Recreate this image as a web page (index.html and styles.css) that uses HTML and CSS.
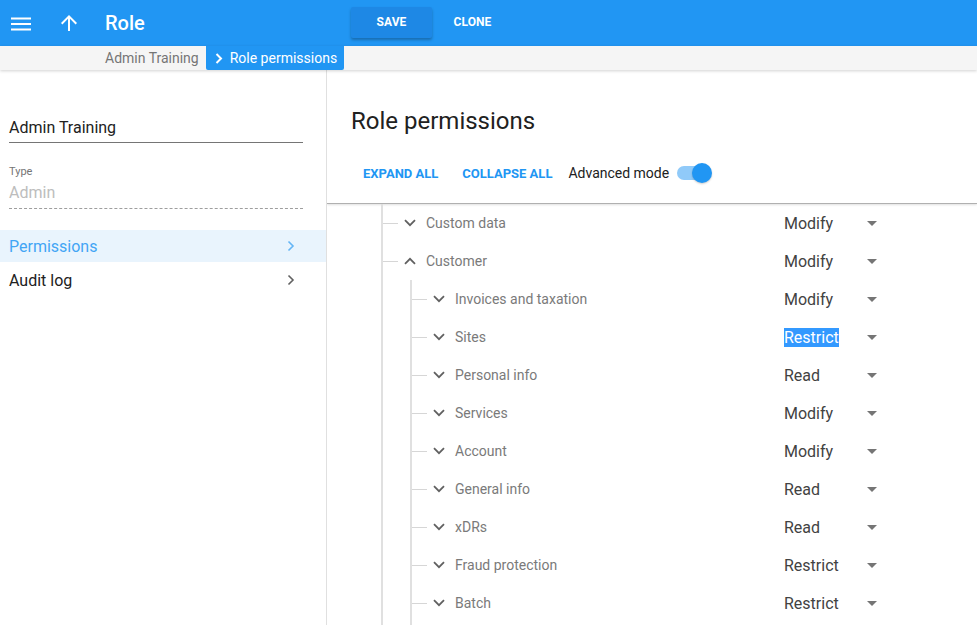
FILE: index.html
```html
<!DOCTYPE html>
<html lang="en">
<head>
<meta charset="utf-8">
<title>Role</title>
<link rel="stylesheet" href="styles.css">
</head>
<body>
<header class="appbar">
  <span class="icon menu-icon">
    <svg width="20" height="14" viewBox="0 0 20 14"><rect x="0" y="0.5" width="20" height="2" fill="#fff"/><rect x="0" y="6" width="20" height="2" fill="#fff"/><rect x="0" y="11.5" width="20" height="2" fill="#fff"/></svg>
  </span>
  <span class="icon up-icon">
    <svg width="24" height="24" viewBox="0 0 24 24"><path d="M4 12l1.41 1.41L11 7.83V20h2V7.83l5.58 5.59L20 12l-8-8-8 8z" fill="#fff"/></svg>
  </span>
  <h1 class="title">Role</h1>
  <div class="actions">
    <button class="btn btn-raised">SAVE</button>
    <button class="btn btn-flat">CLONE</button>
  </div>
</header>
<nav class="crumbs">
  <span class="crumb">Admin Training</span>
  <span class="crumb crumb-active">
    <svg width="8" height="11" viewBox="0 0 8 11"><polyline points="1.5,1 6,5.5 1.5,10" fill="none" stroke="#fff" stroke-width="2"/></svg>
    Role permissions
  </span>
</nav>
<main class="layout">
  <aside class="side">
    <div class="field">Admin Training</div>
    <div class="field-label">Type</div>
    <div class="field field-ro">Admin</div>
    <ul class="side-nav">
      <li class="nav-item active"><span>Permissions</span>
        <svg width="8" height="12" viewBox="0 0 8 12"><polyline points="1.5,1.5 6,6 1.5,10.5" fill="none" stroke="#64b5f6" stroke-width="1.6"/></svg>
      </li>
      <li class="nav-item"><span>Audit log</span>
        <svg width="8" height="12" viewBox="0 0 8 12"><polyline points="1.5,1.5 6,6 1.5,10.5" fill="none" stroke="#616161" stroke-width="1.6"/></svg>
      </li>
    </ul>
  </aside>
  <section class="content">
    <div class="content-head">
      <h2 class="page-title">Role permissions</h2>
      <div class="toolbar">
        <button class="tbtn">EXPAND ALL</button>
        <button class="tbtn">COLLAPSE ALL</button>
        <span class="adv">Advanced mode</span>
        <span class="toggle"><span class="track"></span><span class="thumb"></span></span>
      </div>
    </div>
    <div class="tree-wrap">
      <ul class="tree">
        <li>
          <div class="row"><span class="conn"></span><svg class="chev" width="12" height="8" viewBox="0 0 12 8"><polyline points="1,1.2 6,6.2 11,1.2"/></svg><span class="label">Custom data</span><span class="val"><span class="val-text">Modify</span><span class="caret"></span></span></div>
        </li>
        <li>
          <div class="row"><span class="conn"></span><svg class="chev" width="12" height="8" viewBox="0 0 12 8"><polyline points="1,6.8 6,1.8 11,6.8"/></svg><span class="label">Customer</span><span class="val"><span class="val-text">Modify</span><span class="caret"></span></span></div>
          <ul class="tree sub">
            <li><div class="row"><span class="conn"></span><svg class="chev" width="12" height="8" viewBox="0 0 12 8"><polyline points="1,1.2 6,6.2 11,1.2"/></svg><span class="label">Invoices and taxation</span><span class="val"><span class="val-text">Modify</span><span class="caret"></span></span></div></li>
            <li><div class="row"><span class="conn"></span><svg class="chev" width="12" height="8" viewBox="0 0 12 8"><polyline points="1,1.2 6,6.2 11,1.2"/></svg><span class="label">Sites</span><span class="val"><span class="val-text"><span class="sel">Restrict</span></span><span class="caret"></span></span></div></li>
            <li><div class="row"><span class="conn"></span><svg class="chev" width="12" height="8" viewBox="0 0 12 8"><polyline points="1,1.2 6,6.2 11,1.2"/></svg><span class="label">Personal info</span><span class="val"><span class="val-text">Read</span><span class="caret"></span></span></div></li>
            <li><div class="row"><span class="conn"></span><svg class="chev" width="12" height="8" viewBox="0 0 12 8"><polyline points="1,1.2 6,6.2 11,1.2"/></svg><span class="label">Services</span><span class="val"><span class="val-text">Modify</span><span class="caret"></span></span></div></li>
            <li><div class="row"><span class="conn"></span><svg class="chev" width="12" height="8" viewBox="0 0 12 8"><polyline points="1,1.2 6,6.2 11,1.2"/></svg><span class="label">Account</span><span class="val"><span class="val-text">Modify</span><span class="caret"></span></span></div></li>
            <li><div class="row"><span class="conn"></span><svg class="chev" width="12" height="8" viewBox="0 0 12 8"><polyline points="1,1.2 6,6.2 11,1.2"/></svg><span class="label">General info</span><span class="val"><span class="val-text">Read</span><span class="caret"></span></span></div></li>
            <li><div class="row"><span class="conn"></span><svg class="chev" width="12" height="8" viewBox="0 0 12 8"><polyline points="1,1.2 6,6.2 11,1.2"/></svg><span class="label">xDRs</span><span class="val"><span class="val-text">Read</span><span class="caret"></span></span></div></li>
            <li><div class="row"><span class="conn"></span><svg class="chev" width="12" height="8" viewBox="0 0 12 8"><polyline points="1,1.2 6,6.2 11,1.2"/></svg><span class="label">Fraud protection</span><span class="val"><span class="val-text">Restrict</span><span class="caret"></span></span></div></li>
            <li><div class="row"><span class="conn"></span><svg class="chev" width="12" height="8" viewBox="0 0 12 8"><polyline points="1,1.2 6,6.2 11,1.2"/></svg><span class="label">Batch</span><span class="val"><span class="val-text">Restrict</span><span class="caret"></span></span></div></li>
          </ul>
        </li>
      </ul>
    </div>
  </section>
</main>
</body>
</html>
```

FILE: styles.css
```css
* { box-sizing: border-box; }
html, body { margin: 0; padding: 0; }
body {
  font-family: Roboto, "Liberation Sans", Arial, sans-serif;
  background: #fff;
  width: 977px;
  height: 625px;
  overflow: hidden;
  color: #212121;
}
ul { list-style: none; margin: 0; padding: 0; }
button { font-family: inherit; border: 0; cursor: pointer; }

/* App bar */
.appbar {
  height: 46px;
  background: #2196f3;
  display: flex;
  align-items: center;
  color: #fff;
}
.icon { display: flex; align-items: center; }
.menu-icon { margin-left: 11px; width: 20px; height: 14px; margin-top: 1px; }
.up-icon { margin-left: 26px; width: 24px; height: 24px; }
.title {
  margin: 0 0 0 24px;
  width: 246px;
  font-size: 20px;
  font-weight: 500;
  line-height: 24px;
}
.actions { display: flex; align-items: center; margin-top: -2px; }
.btn {
  width: 81px;
  height: 31px;
  font-size: 12px;
  font-weight: 700;
  color: #fff;
  background: transparent;
  border-radius: 2px;
  letter-spacing: 0.1px;
}
.btn-raised {
  background: #1e88e5;
  box-shadow: 0 2px 3px rgba(0,0,0,0.28);
}

/* Breadcrumbs */
.crumbs {
  height: 24px;
  background: #f5f5f5;
  display: flex;
  align-items: stretch;
  padding-left: 105px;
  box-shadow: 0 1px 3px rgba(0,0,0,0.18);
  position: relative;
  z-index: 2;
}
.crumb {
  font-size: 14px;
  color: #757575;
  display: flex;
  align-items: center;
}
.crumb-active {
  margin-left: 7px;
  background: #2196f3;
  color: #fff;
  padding: 0 7px 0 9px;
  border-radius: 0 0 2px 2px;
}
.crumb-active svg { margin-right: 7px; }

/* Layout */
.layout {
  display: flex;
  height: 555px;
}
.side {
  width: 327px;
  flex: none;
  border-right: 1px solid #e0e0e0;
  padding-top: 48px;
}
.field {
  margin: 0 23px 0 9px;
  font-size: 16px;
  line-height: 20px;
  padding-bottom: 4px;
  border-bottom: 1px solid #757575;
  color: #212121;
}
.field-label {
  margin: 22px 23px 0 9px;
  font-size: 11px;
  line-height: 14px;
  color: #757575;
}
.field-ro {
  margin-top: 4px;
  color: #bdbdbd;
  padding-bottom: 5px;
  border-bottom: 1px dashed #9e9e9e;
}
.side-nav { margin-top: 21px; }
.nav-item {
  height: 32px;
  margin-bottom: 2px;
  display: flex;
  align-items: center;
  justify-content: space-between;
  padding: 0 31px 0 9px;
  font-size: 16px;
  color: #212121;
}
.nav-item.active {
  background: #e9f4fd;
  color: #42a5f5;
}

/* Content */
.content {
  flex: 1;
  min-width: 0;
  overflow: hidden;
}
.content-head {
  padding: 37px 0 14px 24px;
  border-bottom: 1px solid #b0b0b0;
  box-shadow: 0 1px 2px rgba(0,0,0,0.12);
}
.page-title {
  margin: 0;
  font-size: 24px;
  font-weight: 400;
  line-height: 28px;
  color: #212121;
}
.toolbar {
  margin-top: 22px;
  height: 32px;
  display: flex;
  align-items: center;
}
.tbtn {
  background: transparent;
  font-size: 13px;
  font-weight: 700;
  color: #2196f3;
  padding: 0 12px;
  height: 32px;
}
.adv {
  margin-left: 4px;
  font-size: 14px;
  color: #212121;
}
.toggle {
  position: relative;
  margin-left: 8px;
  width: 36px;
  height: 20px;
  display: inline-block;
}
.track {
  position: absolute;
  left: 0;
  top: 3px;
  width: 33px;
  height: 14px;
  border-radius: 7px;
  background: #90caf9;
}
.thumb {
  position: absolute;
  left: 15px;
  top: 0;
  width: 20px;
  height: 20px;
  border-radius: 50%;
  background: #2196f3;
  box-shadow: 0 1px 2px rgba(0,0,0,0.2);
}

/* Tree */
.tree-wrap { margin-left: 54px; }
.tree {
  border-left: 2px solid #e0e0e0;
}
.tree.sub {
  margin-left: 27px;
  padding-bottom: 60px;
}
.row {
  height: 38px;
  display: flex;
  align-items: center;
}
.conn {
  width: 15px;
  height: 1px;
  background: #d6d6d6;
  flex: none;
}
.chev {
  margin-left: 6px;
  margin-right: 10px;
  flex: none;
}
.chev polyline {
  fill: none;
  stroke: #616161;
  stroke-width: 1.8;
}
.label {
  flex: 1;
  font-size: 14px;
  color: #7a7a7a;
}
.val {
  width: 193px;
  flex: none;
  display: flex;
  align-items: center;
}
.val-text {
  width: 83px;
  font-size: 16px;
  color: #424242;
}
.sel {
  background: #3399ff;
  color: #fff;
}
.caret {
  width: 0;
  height: 0;
  border-left: 5px solid transparent;
  border-right: 5px solid transparent;
  border-top: 5px solid #757575;
}
```
